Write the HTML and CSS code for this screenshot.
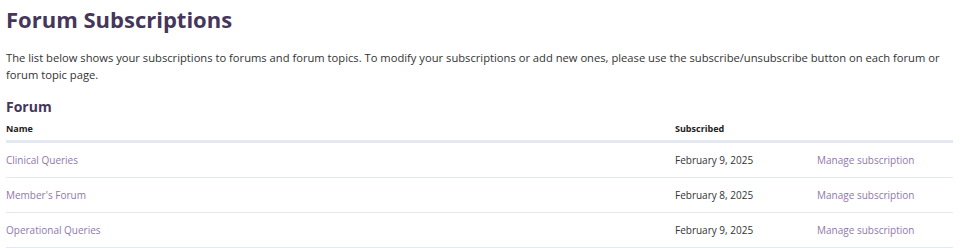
FILE: index.html
```html
<!DOCTYPE html>
<html lang="en">
<head>
    <meta charset="UTF-8">
    <meta name="viewport" content="width=device-width, initial-scale=1.0">
    <title>Forum Subscriptions</title>
    <link rel="stylesheet" href="styles.css">
</head>
<body>
    <h1 class="page-title">Forum Subscriptions</h1>

    <p class="intro">
        The list below shows your subscriptions to forums and forum topics. To modify your subscriptions or add new ones, please use the subscribe/unsubscribe button on each forum or forum topic page.
    </p>

    <h2 class="section-title">Forum</h2>

    <table class="subs-table">
        <thead>
            <tr>
                <th class="col-name">Name</th>
                <th class="col-date">Subscribed</th>
                <th class="col-manage"></th>
            </tr>
        </thead>
        <tbody>
            <tr>
                <td><a href="#">Clinical Queries</a></td>
                <td>February 9, 2025</td>
                <td><a href="#">Manage subscription</a></td>
            </tr>
            <tr>
                <td><a href="#">Member's Forum</a></td>
                <td>February 8, 2025</td>
                <td><a href="#">Manage subscription</a></td>
            </tr>
            <tr>
                <td><a href="#">Operational Queries</a></td>
                <td>February 9, 2025</td>
                <td><a href="#">Manage subscription</a></td>
            </tr>
        </tbody>
    </table>
</body>
</html>
```

FILE: styles.css
```css
body {
    font-family: "Open Sans", sans-serif;
    color: #333;
    margin: 0;
    padding: 0 7px 0 6px;
    background-color: #fff;
}

a {
    color: #8f78aa;
    text-decoration: none;
}

.page-title {
    font-size: 22px;
    font-weight: 700;
    color: #45365a;
    margin: 4px 0 0;
    line-height: 30px;
}

.intro {
    font-size: 11.2px;
    line-height: 17px;
    margin: 15px 0 0;
}

.section-title {
    font-size: 14px;
    font-weight: 700;
    color: #45365a;
    margin: 15px 0 0;
    line-height: 18px;
}

.subs-table {
    width: 100%;
    border-collapse: collapse;
    font-size: 10px;
}

.subs-table th {
    text-align: left;
    font-size: 9px;
    font-weight: 700;
    color: #222;
    padding: 6px 0 5px;
    border-bottom: 3px solid #e4e9f1;
}

.subs-table td {
    padding: 0 0 1px;
    height: 33px;
    border-bottom: 1px solid #e4e9f1;
}

.col-date {
    width: 142px;
}

.col-manage {
    width: 136px;
}
```
